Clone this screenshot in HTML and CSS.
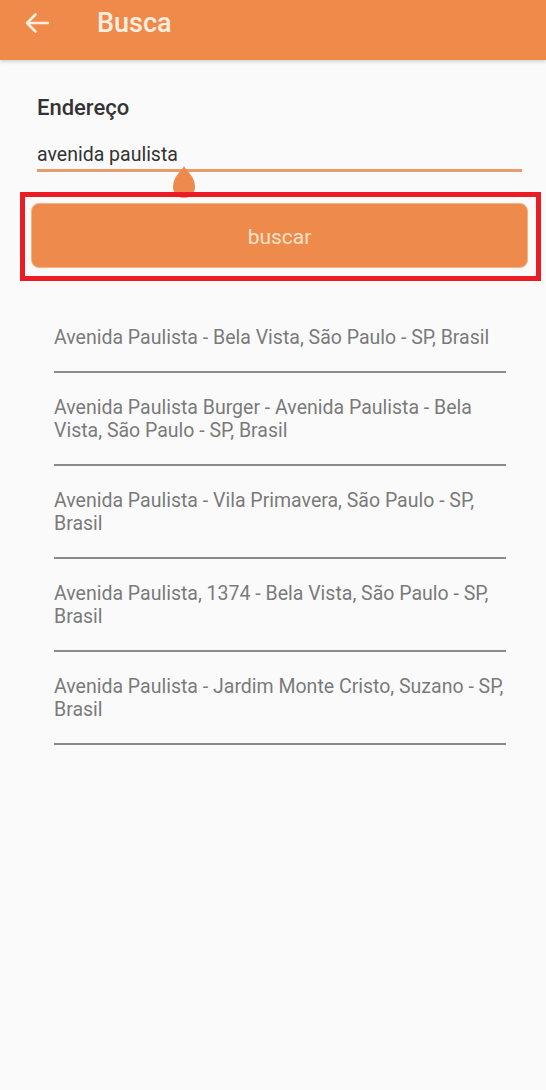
FILE: index.html
```html
<!DOCTYPE html>
<html lang="pt-BR">

<head>
    <meta charset="UTF-8">
    <title>Busca</title>
    <link rel="stylesheet" href="styles.css">
</head>

<body>
    <div class="header">
        <svg class="back" width="26" height="22" viewBox="0 0 26 22">
            <path d="M24 11H3M11.5 2.5L3 11l8.5 8.5" fill="none" stroke="#fdeee0" stroke-width="2.6" stroke-linecap="round" stroke-linejoin="round"/>
        </svg>
        <span class="title">Busca</span>
    </div>

    <div class="content">
        <div class="field">
            <div class="label">Endereço</div>
            <div class="input">avenida paulista</div>
            <svg class="handle" width="24" height="33" viewBox="0 0 24 33">
                <path d="M12 0C14 5 23 10 23 21A11 11 0 0 1 1 21C1 10 10 5 12 0Z" fill="#ee8a4c"/>
            </svg>
        </div>

        <div class="highlight">
            <button class="btn">buscar</button>
        </div>

        <ul class="results">
            <li>Avenida Paulista - Bela Vista, São Paulo - SP, Brasil</li>
            <li>Avenida Paulista Burger - Avenida Paulista - Bela Vista, São Paulo - SP, Brasil</li>
            <li>Avenida Paulista - Vila Primavera, São Paulo - SP, Brasil</li>
            <li>Avenida Paulista, 1374 - Bela Vista, São Paulo - SP, Brasil</li>
            <li>Avenida Paulista - Jardim Monte Cristo, Suzano - SP, Brasil</li>
        </ul>
    </div>
</body>

</html>
```

FILE: styles.css
```css
body,
html {
    margin: 0;
    height: 100%;
}

body {
    background-color: #fafafa;
    font-family: Roboto, "Liberation Sans", sans-serif;
}

ul {
    margin: 0;
    padding: 0;
    list-style-type: none;
}

.header {
    display: flex;
    align-items: center;
    height: 46px;
    padding: 0 0 14px 24px;
    background-color: #ef8a4b;
    box-shadow: 0 2px 3px rgba(0, 0, 0, 0.15);
}

.title {
    margin-left: 47px;
    font-size: 27px;
    font-weight: 500;
    color: #fdeee0;
}

.field {
    position: relative;
    margin: 36px 24px 0 37px;
    padding-bottom: 2px;
    border-bottom: 3px solid #e89c6c;
}

.label {
    font-size: 22px;
    line-height: 24px;
    font-weight: 500;
    color: #333;
}

.input {
    margin-top: 23px;
    font-size: 19.5px;
    line-height: 24px;
    color: #333;
}

.handle {
    position: absolute;
    left: 135px;
    top: 70px;
}

.highlight {
    position: relative;
    z-index: 1;
    margin: 20px 5px 0 20px;
    padding: 6px 8px 8px 6px;
    border: 5px solid #ec1c24;
}

.btn {
    display: block;
    width: 100%;
    height: 65px;
    padding-top: 3px;
    border: 1px solid #f3b588;
    border-radius: 8px;
    background-color: #ee8a4c;
    font-family: Roboto, "Liberation Sans", sans-serif;
    font-size: 21px;
    color: #fde3c8;
}

.results {
    margin: 22px 40px 0 54px;
}

.results li {
    padding: 23px 0 22px;
    border-bottom: 2px solid #8a8a8a;
    font-size: 19.5px;
    line-height: 23px;
    color: #7a7a7a;
}
```
